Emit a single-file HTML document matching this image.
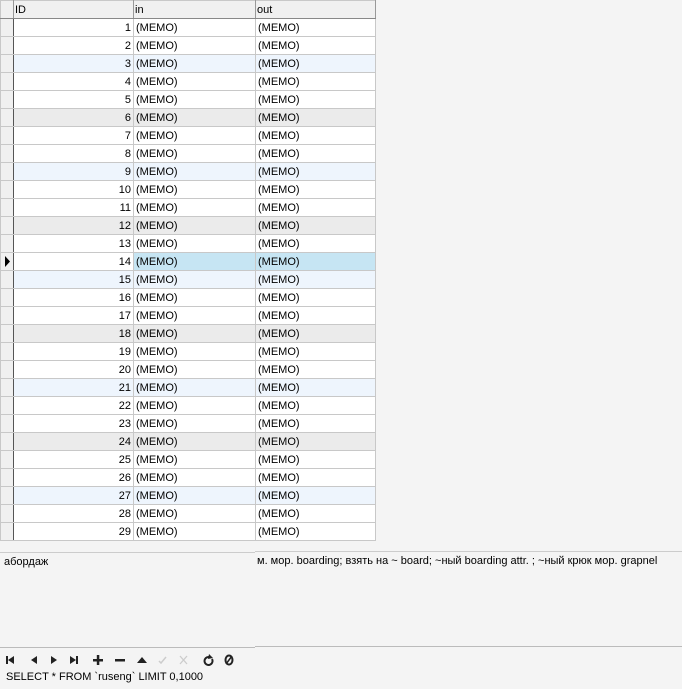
<!DOCTYPE html><html><head><style>
body{margin:0;width:682px;height:689px;background:#f4f4f4;font-family:"Liberation Sans",sans-serif;font-size:11px;color:#000;position:relative;overflow:hidden}
.g{position:absolute;left:0;top:0;border-collapse:collapse;table-layout:fixed}
.g td{height:17px;padding:2px 2px 0 2px;border:1px solid #c8c8c8;background:#fff;white-space:nowrap;overflow:hidden;line-height:15px;box-sizing:border-box}
.g tr{height:18px}
.g td.i{background:#f0f0f0;border-right:1px solid #555;padding:0;position:relative}
.g tr.h td{background:#f0f0f0;border-bottom:1px solid #888;border-right-color:#999;padding:1px 1px 0 1px}
.g tr.b td{background:#eef5fd}.g tr.b td.i{background:#f0f0f0}
.g tr.s td{background:#ebebeb}.g tr.s td.i{background:#f0f0f0}
.g tr.sel td.c{background:#c6e5f3}
.n{text-align:right}
.p{position:absolute;top:552px;height:94px;border-top:1px solid #ccc;border-bottom:1px solid #bbb;background:#f4f4f4;white-space:nowrap;overflow:hidden}
</style></head><body>
<table class="g"><colgroup><col style="width:13px"><col style="width:120px"><col style="width:122px"><col style="width:120px"></colgroup>
<tr class="h"><td class="i"></td><td>ID</td><td>in</td><td>out</td></tr>
<tr><td class="i"></td><td class="n">1</td><td class="c">(MEMO)</td><td class="c">(MEMO)</td></tr>
<tr><td class="i"></td><td class="n">2</td><td class="c">(MEMO)</td><td class="c">(MEMO)</td></tr>
<tr class="b"><td class="i"></td><td class="n">3</td><td class="c">(MEMO)</td><td class="c">(MEMO)</td></tr>
<tr><td class="i"></td><td class="n">4</td><td class="c">(MEMO)</td><td class="c">(MEMO)</td></tr>
<tr><td class="i"></td><td class="n">5</td><td class="c">(MEMO)</td><td class="c">(MEMO)</td></tr>
<tr class="s"><td class="i"></td><td class="n">6</td><td class="c">(MEMO)</td><td class="c">(MEMO)</td></tr>
<tr><td class="i"></td><td class="n">7</td><td class="c">(MEMO)</td><td class="c">(MEMO)</td></tr>
<tr><td class="i"></td><td class="n">8</td><td class="c">(MEMO)</td><td class="c">(MEMO)</td></tr>
<tr class="b"><td class="i"></td><td class="n">9</td><td class="c">(MEMO)</td><td class="c">(MEMO)</td></tr>
<tr><td class="i"></td><td class="n">10</td><td class="c">(MEMO)</td><td class="c">(MEMO)</td></tr>
<tr><td class="i"></td><td class="n">11</td><td class="c">(MEMO)</td><td class="c">(MEMO)</td></tr>
<tr class="s"><td class="i"></td><td class="n">12</td><td class="c">(MEMO)</td><td class="c">(MEMO)</td></tr>
<tr><td class="i"></td><td class="n">13</td><td class="c">(MEMO)</td><td class="c">(MEMO)</td></tr>
<tr class="sel"><td class="i"><svg style="position:absolute;left:0;top:0" width="12" height="17"><polygon points="4,3 9,8.5 4,14" fill="#000"/></svg></td><td class="n">14</td><td class="c">(MEMO)</td><td class="c">(MEMO)</td></tr>
<tr class="b"><td class="i"></td><td class="n">15</td><td class="c">(MEMO)</td><td class="c">(MEMO)</td></tr>
<tr><td class="i"></td><td class="n">16</td><td class="c">(MEMO)</td><td class="c">(MEMO)</td></tr>
<tr><td class="i"></td><td class="n">17</td><td class="c">(MEMO)</td><td class="c">(MEMO)</td></tr>
<tr class="s"><td class="i"></td><td class="n">18</td><td class="c">(MEMO)</td><td class="c">(MEMO)</td></tr>
<tr><td class="i"></td><td class="n">19</td><td class="c">(MEMO)</td><td class="c">(MEMO)</td></tr>
<tr><td class="i"></td><td class="n">20</td><td class="c">(MEMO)</td><td class="c">(MEMO)</td></tr>
<tr class="b"><td class="i"></td><td class="n">21</td><td class="c">(MEMO)</td><td class="c">(MEMO)</td></tr>
<tr><td class="i"></td><td class="n">22</td><td class="c">(MEMO)</td><td class="c">(MEMO)</td></tr>
<tr><td class="i"></td><td class="n">23</td><td class="c">(MEMO)</td><td class="c">(MEMO)</td></tr>
<tr class="s"><td class="i"></td><td class="n">24</td><td class="c">(MEMO)</td><td class="c">(MEMO)</td></tr>
<tr><td class="i"></td><td class="n">25</td><td class="c">(MEMO)</td><td class="c">(MEMO)</td></tr>
<tr><td class="i"></td><td class="n">26</td><td class="c">(MEMO)</td><td class="c">(MEMO)</td></tr>
<tr class="b"><td class="i"></td><td class="n">27</td><td class="c">(MEMO)</td><td class="c">(MEMO)</td></tr>
<tr><td class="i"></td><td class="n">28</td><td class="c">(MEMO)</td><td class="c">(MEMO)</td></tr>
<tr><td class="i"></td><td class="n">29</td><td class="c">(MEMO)</td><td class="c">(MEMO)</td></tr>
</table>
<div class="p" style="left:0;width:255px;top:552px"><div style="padding:3px 4px">абордаж</div></div>
<div class="p" style="left:255px;width:427px;top:551px;height:94px"><div style="padding:3px 2px">м. мор. boarding; взять на ~ board; ~ный boarding attr. ; ~ный крюк мор. grapnel</div></div>
<svg style="position:absolute;left:4px;top:654px" width="240" height="12">
<g fill="#222"><rect x="2" y="2" width="2" height="8"/><polygon points="4,6 10,2 10,10"/>
<polygon points="27,6 33,2 33,10"/>
<polygon points="47,2 53,6 47,10"/>
<polygon points="66,2 72,6 66,10"/><rect x="72" y="2" width="2" height="8"/>
<rect x="89" y="5" width="10" height="2.5"/><rect x="92.8" y="1" width="2.5" height="10"/>
<rect x="111" y="5" width="10" height="2.5"/>
<polygon points="133,9 138,3 143,9"/></g>
<path d="M155 7l2 2 5-6" stroke="#ccc" fill="none" stroke-width="1.5"/>
<path d="M176 2l7 8M183 2l-7 8" stroke="#ccc" stroke-width="1.3"/>
<path d="M205 3a4 4 0 1 0 3 2" stroke="#222" stroke-width="2" fill="none"/><polygon points="205,0 209,4 204,5" fill="#222"/>
<ellipse cx="225" cy="6" rx="3.5" ry="4.5" stroke="#222" stroke-width="2" fill="none"/><path d="M222 10l6-8" stroke="#222" stroke-width="1.5"/>
</svg>
<div style="position:absolute;left:6px;top:671px">SELECT * FROM `ruseng` LIMIT 0,1000</div>
</body></html>
